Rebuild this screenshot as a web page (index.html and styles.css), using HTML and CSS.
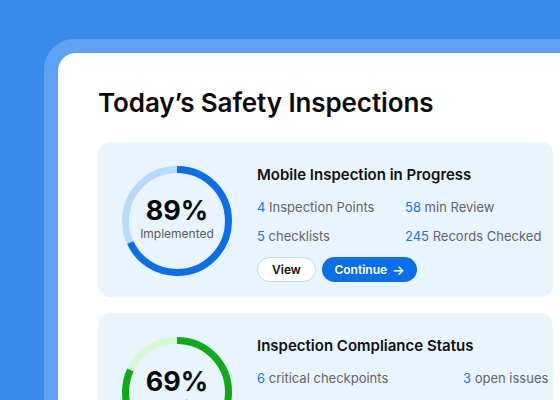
FILE: index.html
```html
<!DOCTYPE html>
<html>
<head>
<meta charset="utf-8">
<link rel="stylesheet" href="styles.css">
</head>
<body>
<div class="frame">
  <div class="panel">
    <h1 class="title">Today’s Safety Inspections</h1>
    <div class="card">
      <div class="ring">
        <svg width="110" height="110" viewBox="0 0 110 110">
          <circle cx="55" cy="55" r="51.5" fill="none" stroke="#b8dafd" stroke-width="7"/>
          <circle cx="55" cy="55" r="51.5" fill="none" stroke="#0a6ee9" stroke-width="7" stroke-dasharray="220 400" transform="rotate(-90 55 55)"/>
        </svg>
        <div class="ring-text">
          <div class="pct">89%</div>
          <div class="pct-label">Implemented</div>
        </div>
      </div>
      <div class="info">
        <div class="info-title">Mobile Inspection in Progress</div>
        <div class="stats stats-a">
          <div class="stat"><span class="num">4</span> Inspection Points</div>
          <div class="stat"><span class="num">58</span> min Review</div>
          <div class="stat"><span class="num">5</span> checklists</div>
          <div class="stat"><span class="num">245</span> Records Checked</div>
        </div>
        <div class="actions">
          <button class="btn btn-view">View</button>
          <button class="btn btn-go">Continue <span class="arrow">→</span></button>
        </div>
      </div>
    </div>
    <div class="card">
      <div class="ring">
        <svg width="110" height="110" viewBox="0 0 110 110">
          <circle cx="55" cy="55" r="51.5" fill="none" stroke="#d6f8d6" stroke-width="7"/>
          <circle cx="55" cy="55" r="51.5" fill="none" stroke="#10a91a" stroke-width="7" stroke-dasharray="265 400" transform="rotate(-90 55 55)"/>
        </svg>
        <div class="ring-text">
          <div class="pct">69%</div>
          <div class="pct-label">Compliant</div>
        </div>
      </div>
      <div class="info">
        <div class="info-title">Inspection Compliance Status</div>
        <div class="stats stats-b">
          <div class="stat"><span class="num">6</span> critical checkpoints</div>
          <div class="stat"><span class="num">3</span> open issues</div>
        </div>
      </div>
    </div>
  </div>
</div>
</body>
</html>
```
FILE: styles.css
```css
html, body {
  margin: 0;
  padding: 0;
  width: 560px;
  height: 400px;
  overflow: hidden;
  background: #3a8be9;
  font-family: Inter, "Noto Sans", sans-serif;
}
.frame {
  margin: 39px 0 0 44px;
  background: #60a2f1;
  border-radius: 30px 0 0 0;
  padding: 14px 0 0 14px;
  height: 400px;
}
.panel {
  background: #ffffff;
  border-radius: 18px 0 0 0;
  padding: 34px 7px 0 40px;
  height: 400px;
}
.title {
  margin: 0 0 24px 0;
  font-size: 26px;
  line-height: 31px;
  font-weight: 600;
  color: #0a0a0a;
  letter-spacing: -0.1px;
}
.card {
  display: flex;
  align-items: flex-start;
  gap: 25px;
  background: #e8f4fe;
  border-radius: 12px;
  padding: 24px 11px 15px 24px;
  margin-bottom: 16px;
}
.ring {
  position: relative;
  width: 110px;
  height: 110px;
  flex: none;
}
.ring svg { display: block; }
.ring-text {
  position: absolute;
  inset: 0;
  display: flex;
  flex-direction: column;
  align-items: center;
  justify-content: center;
  padding-bottom: 5px;
}
.pct {
  font-size: 27px;
  font-weight: 700;
  line-height: 30px;
  color: #0a0a0a;
}
.pct-label {
  font-size: 12px;
  color: #5c5c5c;
  line-height: 15px;
}
.info {
  display: flex;
  flex-direction: column;
}
.info-title {
  font-size: 15px;
  font-weight: 600;
  color: #111;
  line-height: 18px;
  margin-bottom: 14px;
}
.stats {
  display: grid;
  row-gap: 11px;
  font-size: 13px;
  line-height: 18px;
  color: #646468;
  white-space: nowrap;
}
.stats-a { grid-template-columns: 148px auto; }
.stats-b { grid-template-columns: 206px auto; }
.num { color: #1a73e8; }
.actions {
  display: flex;
  gap: 6px;
  margin-top: 12px;
}
.btn {
  height: 25px;
  border-radius: 13px;
  font-family: inherit;
  font-size: 12px;
  font-weight: 600;
  padding: 0;
  display: flex;
  align-items: center;
  justify-content: center;
}
.btn-view {
  width: 59px;
  background: #ffffff;
  border: 1px solid #b9d8f8;
  color: #111;
}
.btn-go {
  width: 95px;
  background: #0a6ee9;
  border: none;
  color: #ffffff;
  gap: 5px;
}
.arrow { font-size: 13px; }
```
